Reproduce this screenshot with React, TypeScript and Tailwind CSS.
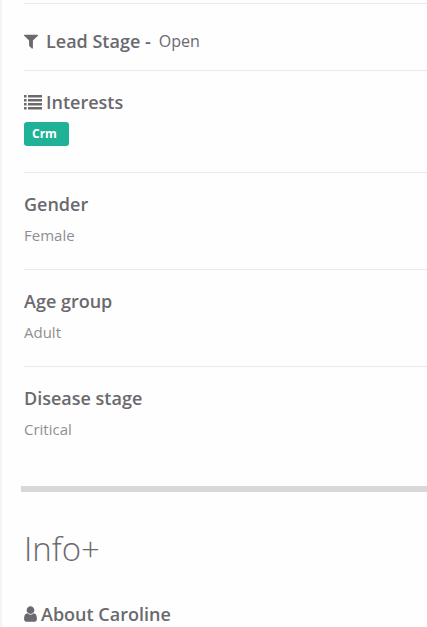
import type { ReactNode } from "react";

const facts = [
  { label: "Gender", value: "Female" },
  { label: "Age group", value: "Adult" },
  { label: "Disease stage", value: "Critical" },
];

function FilterIcon() {
  return (
    <svg aria-hidden="true" viewBox="192 0 1408 1792" className="h-[18px] w-[14px] shrink-0" fill="currentColor">
      <path d="M1595 295q17 41-14 70l-493 493v742q0 42-39 59-13 5-25 5-27 0-45-19l-256-256q-19-19-19-45v-486l-493-493q-31-29-14-70 17-39 59-39h1280q42 0 59 39z" />
    </svg>
  );
}

function ListIcon() {
  return (
    <svg aria-hidden="true" viewBox="0 0 18 18" className="size-[18px] shrink-0" fill="currentColor">
      {[2, 6, 10, 14].map((y) => (
        <g key={y}>
          <rect x="0" y={y} width="2.6" height="2.5" rx="0.3" />
          <rect x="4" y={y} width="14" height="2.5" rx="0.3" />
        </g>
      ))}
    </svg>
  );
}

function UserIcon() {
  return (
    <svg aria-hidden="true" viewBox="256 0 1280 1792" className="h-[18px] w-[13px] shrink-0" fill="currentColor">
      <path d="M1536 1399q0 109-62.5 187t-150.5 78h-854q-88 0-150.5-78t-62.5-187q0-85 8.5-160.5t31.5-152 58.5-131 94-89 134.5-34.5q131 128 313 128t313-128q76 0 134.5 34.5t94 89 58.5 131 31.5 152 8.5 160.5zm-256-887q0 159-112.5 271.5t-271.5 112.5-271.5-112.5-112.5-271.5 112.5-271.5 271.5-112.5 271.5 112.5 112.5 271.5z" />
    </svg>
  );
}

function Heading({ children }: { children: ReactNode }) {
  return (
    <h3 className="flex items-center gap-1 text-lg leading-6 font-semibold">
      {children}
    </h3>
  );
}

export default function App() {
  return (
    <main className="min-h-screen overflow-hidden border-l-2 border-[#f3f3f8] bg-[#fefefe] pt-[3px] font-['Open_Sans',sans-serif] text-[#6a696e]">
      <div className="ml-[22px]">
        <section className="flex items-center gap-2 border-t border-[#e9e9eb] pt-[25px] pb-[17px]">
          <Heading>
            <FilterIcon />
            <span className="ml-1">Lead Stage -</span>
          </Heading>
          <span className="text-base leading-6">Open</span>
        </section>

        <section className="border-t border-[#e9e9eb] pt-[19px] pb-[26px]">
          <Heading>
            <ListIcon />
            Interests
          </Heading>
          <div className="mt-2 flex">
            <span className="rounded-[3px] bg-[#1fb296] pr-3 pl-2 text-xs leading-6 font-bold text-white">
              Crm
            </span>
          </div>
        </section>

        {facts.map((fact) => (
          <section key={fact.label} className="border-t border-[#e9e9eb] pt-[19px] pb-[23px]">
            <Heading>{fact.label}</Heading>
            <p className="mt-2 text-[15px] leading-[22px] text-[#8f8e92]">{fact.value}</p>
          </section>
        ))}
      </div>

      <div className="mt-[23px] ml-[19px] h-1.5 bg-[#d8d7d9]" />

      <section className="ml-[22px] pt-[37px]">
        <h2 className="text-[33px] leading-10 font-light">Info+</h2>
        <div className="mt-[33px]">
          <Heading>
            <UserIcon />
            About Caroline
          </Heading>
        </div>
      </section>
    </main>
  );
}
